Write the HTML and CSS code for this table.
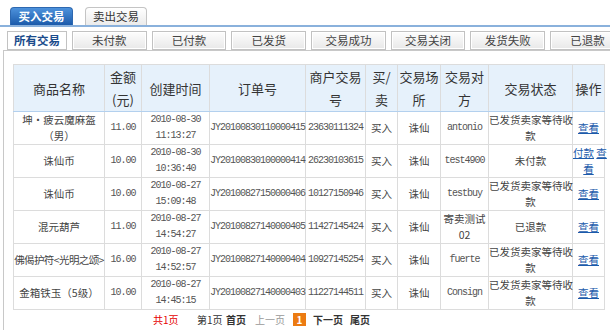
FILE: index.html
```html
<!DOCTYPE html>
<html lang="zh-CN">
<head>
<meta charset="utf-8">
<title>交易</title>
<link rel="stylesheet" href="styles.css">
</head>
<body>
<div class="tabs">
  <span class="tab tab-active">买入交易</span>
  <span class="tab tab-idle">卖出交易</span>
</div>
<div class="subtabs">
  <span class="sub sub-active">所有交易</span>
  <span class="sub">未付款</span>
  <span class="sub">已付款</span>
  <span class="sub">已发货</span>
  <span class="sub">交易成功</span>
  <span class="sub">交易关闭</span>
  <span class="sub">发货失败</span>
  <span class="sub">已退款</span>
</div>
<div class="panel">
  <table class="orders">
    <colgroup>
      <col class="c-name"><col class="c-amt"><col class="c-time"><col class="c-no"><col class="c-mno">
      <col class="c-bs"><col class="c-place"><col class="c-peer"><col class="c-state"><col class="c-op">
    </colgroup>
    <thead>
      <tr>
        <th>商品名称</th>
        <th>金额<br>(元)</th>
        <th>创建时间</th>
        <th>订单号</th>
        <th>商户交易<br>号</th>
        <th>买/<br>卖</th>
        <th>交易场<br>所</th>
        <th>交易对<br>方</th>
        <th>交易状态</th>
        <th>操作</th>
      </tr>
    </thead>
    <tbody>
      <tr>
        <td>坤·疲云魔麻盔<br>（男）</td>
        <td class="mono">11.00</td>
        <td class="mono">2010-08-30<br>11:13:27</td>
        <td class="mono no">JY20100830110000415</td>
        <td class="mono">23630111324</td>
        <td>买入</td>
        <td>诛仙</td>
        <td class="mono">antonio</td>
        <td>已发货卖家等待收<br>款</td>
        <td><a href="#">查看</a></td>
      </tr>
      <tr>
        <td>诛仙币</td>
        <td class="mono">10.00</td>
        <td class="mono">2010-08-30<br>10:36:40</td>
        <td class="mono no">JY20100830100000414</td>
        <td class="mono">26230103615</td>
        <td>买入</td>
        <td>诛仙</td>
        <td class="mono">test4900</td>
        <td>未付款</td>
        <td><a href="#">付款</a> <a href="#">查<br>看</a></td>
      </tr>
      <tr>
        <td>诛仙币</td>
        <td class="mono">10.00</td>
        <td class="mono">2010-08-27<br>15:09:48</td>
        <td class="mono no">JY20100827150000406</td>
        <td class="mono">10127150946</td>
        <td>买入</td>
        <td>诛仙</td>
        <td class="mono">testbuy</td>
        <td>已发货卖家等待收<br>款</td>
        <td><a href="#">查看</a></td>
      </tr>
      <tr>
        <td>混元葫芦</td>
        <td class="mono">11.00</td>
        <td class="mono">2010-08-27<br>14:54:27</td>
        <td class="mono no">JY20100827140000405</td>
        <td class="mono">11427145424</td>
        <td>买入</td>
        <td>诛仙</td>
        <td>寄卖测试<br>02</td>
        <td>已退款</td>
        <td><a href="#">查看</a></td>
      </tr>
      <tr>
        <td class="tight">佛偈护符&lt;光明之颂&gt;</td>
        <td class="mono">16.00</td>
        <td class="mono">2010-08-27<br>14:52:57</td>
        <td class="mono no">JY20100827140000404</td>
        <td class="mono">10927145254</td>
        <td>买入</td>
        <td>诛仙</td>
        <td class="mono">fuerte</td>
        <td>已发货卖家等待收<br>款</td>
        <td><a href="#">查看</a></td>
      </tr>
      <tr>
        <td>金箱铁玉（5级）</td>
        <td class="mono">10.00</td>
        <td class="mono">2010-08-27<br>14:45:15</td>
        <td class="mono no">JY20100827140000403</td>
        <td class="mono">11227144511</td>
        <td>买入</td>
        <td>诛仙</td>
        <td class="mono">Consign</td>
        <td>已发货卖家等待收<br>款</td>
        <td><a href="#">查看</a></td>
      </tr>
    </tbody>
  </table>
  <div class="pager">
    <span class="pg-total">共1页</span>
    <span class="pg-cur">第1页</span>
    <span class="pg-first">首页</span>
    <span class="pg-prev">上一页</span>
    <span class="pg-num">1</span>
    <span class="pg-next">下一页</span>
    <span class="pg-last">尾页</span>
  </div>
</div>
</body>
</html>
```
FILE: styles.css
```css
* { box-sizing: border-box; }
html, body { margin: 0; background: #fff; }
body {
  font-family: "Noto Sans CJK SC", sans-serif;
  font-size: 12px;
  color: #333;
  width: 610px;
  height: 330px;
  overflow: hidden;
}

.tabs {
  display: flex;
  align-items: flex-end;
  gap: 12px;
  height: 27px;
  padding: 7px 0 0 10px;
  border-bottom: 2px solid #8ab1dc;
}
.tab {
  width: 62px;
  height: 18px;
  line-height: 17px;
  text-align: center;
  font-size: 11.5px;
  border-radius: 4px 4px 0 0;
}
.tab-active {
  width: 63px;
  background: linear-gradient(#4d92dc, #1b5aaa);
  color: #fff;
  font-weight: bold;
  border: 1px solid #2d68b0;
  border-bottom: none;
}
.tab-idle {
  background: linear-gradient(#ffffff, #ebebeb);
  border: 1px solid #c4c4c4;
  border-bottom: none;
  color: #333;
}

.subtabs {
  display: flex;
  gap: 5px;
  height: 23px;
  padding: 4px 0 0 7px;
}
.sub {
  flex-shrink: 0;
  width: 74.7px;
  height: 19px;
  line-height: 17px;
  text-align: center;
  font-size: 11.5px;
  color: #444;
  border: 1px solid #c2c2c2;
  background: linear-gradient(#fdfdfd, #e8e8e8);
  box-shadow: inset 0 0 0 1px #fff;
}
.sub-active {
  width: 60px;
  background: #fff;
  color: #1b4c8c;
  font-weight: bold;
  box-shadow: none;
}

.panel {
  margin-left: 3px;
  height: 280px;
  border-left: 1px solid #c8c8c8;
  border-top: 1px solid #c8c8c8;
  padding: 13px 0 0 9px;
}

.orders {
  width: 591px;
  border-collapse: collapse;
  table-layout: fixed;
}
.c-name { width: 91px; }
.c-amt { width: 37px; }
.c-time { width: 68px; }
.c-no { width: 96px; }
.c-mno { width: 60px; }
.c-bs { width: 32px; }
.c-place { width: 43px; }
.c-peer { width: 48px; }
.c-state { width: 84px; }
.c-op { width: 32px; }

.orders th, .orders td {
  border: 1px solid #dcdcdc;
  padding: 0;
  text-align: center;
  vertical-align: middle;
  white-space: nowrap;
}
.orders th {
  height: 47px;
  background: #e6f1fb;
  font-size: 13px;
  font-weight: normal;
  line-height: 23px;
  color: #333;
  border-bottom-color: #b3d0ee;
}
.orders td {
  height: 33px;
  font-size: 10.5px;
  line-height: 16px;
  color: #444;
}
.orders td.mono {
  font-family: "Liberation Mono", monospace;
  font-size: 10px;
  letter-spacing: -1px;
  color: #555;
}
.orders td.no {
  text-align: left;
}
.orders td.tight {
  letter-spacing: -0.6px;
}
.orders a {
  color: #1c5bab;
  text-decoration: underline;
}

.pager {
  display: flex;
  align-items: center;
  height: 18px;
  padding-left: 140px;
  font-size: 10px;
  color: #333;
  white-space: nowrap;
}
.pager span { flex-shrink: 0; }
.pg-total { width: 44px; color: #e60000; }
.pg-cur { width: 29px; }
.pg-first { width: 29px; font-weight: bold; }
.pg-prev { width: 38px; color: #999; }
.pg-num {
  width: 13px;
  height: 13px;
  line-height: 13px;
  margin-right: 7px;
  background: #ec7b12;
  color: #fff;
  font-weight: bold;
  text-align: center;
}
.pg-next { margin-right: 7px; font-weight: bold; }
.pg-last { font-weight: bold; }
```
